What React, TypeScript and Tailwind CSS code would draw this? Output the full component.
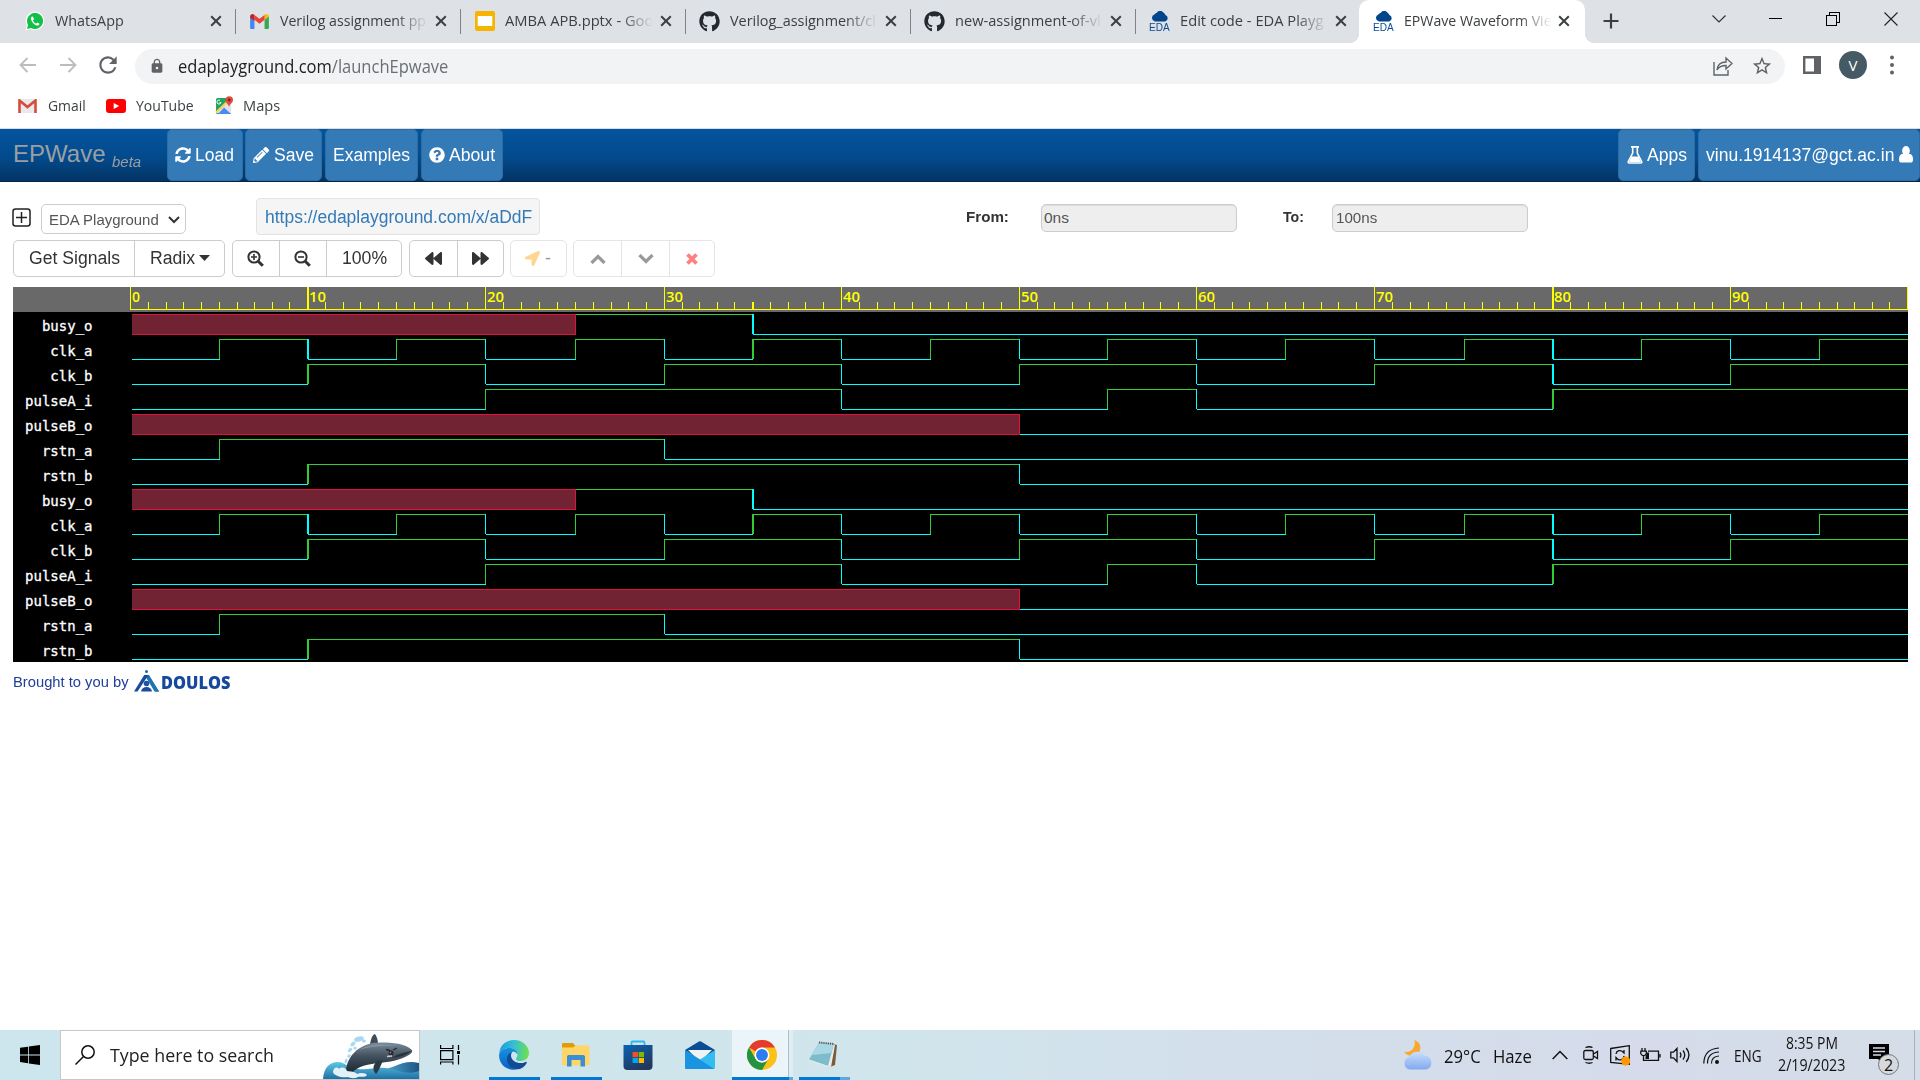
import React, { useLayoutEffect, useRef, useState } from "react";
import {
  FaGithub, FaSyncAlt, FaPencilAlt, FaQuestionCircle,
  FaBackward, FaForward, FaLocationArrow,
} from "react-icons/fa";
import { MdLock, MdRefresh, MdStarBorder } from "react-icons/md";

/* Text squeezed or stretched horizontally to an exact width. */
function Fit({ w, className = "", children }: { w: number; className?: string; children: React.ReactNode }) {
  const ref = useRef<HTMLSpanElement>(null);
  const [s, setS] = useState(1);
  useLayoutEffect(() => {
    if (ref.current) setS(w / ref.current.offsetWidth);
  }, [w]);
  return (
    <span className={"block shrink-0 whitespace-nowrap leading-none " + className} style={{ width: w }}>
      <span ref={ref} className="inline-block origin-left whitespace-pre" style={{ transform: `scaleX(${s})` }}>
        {children}
      </span>
    </span>
  );
}

/* ---------- favicons ---------- */
const WhatsAppIcon = () => (
  <svg viewBox="0 0 20 20" className="size-5">
    <path d="M0.500 19.500l1.400-5A9.300 9.300 0 1 1 5.600 18z" fill="#fff" />
    <path d="M2 18l1.100-4A8 8 0 1 1 6 16.900z" fill="#12bf47" />
    <path d="M7 5.600c-.9.4-1.400 1.600-.9 3.100 1 3 3.300 5 5.600 5.700 1.500.4 2.700-.3 2.800-1.700l-2-1.200-1.200 1.100C9.800 12 8.600 10.800 8 9.400l1-1.200-1-2.500z" fill="#fff" />
  </svg>
);
const GmailIcon = () => (
  <svg viewBox="0 0 20 16" className="h-[15px] w-[19px]">
    <path d="M0 2.500V15a1 1 0 0 0 1 1h3.600V6z" fill="#4285f4" />
    <path d="M20 2.500V15a1 1 0 0 1-1 1h-3.600V6z" fill="#34a853" />
    <path d="M15.400 6l4.600-3.300C20 .3 17.500-.6 15.800.7L15.400 1z" fill="#fbbc04" />
    <path d="M4.600 6.200V1L10 5l5.400-4v5.200L10 10.300z" fill="#ea4335" />
    <path d="M0 2.700v1.200l4.600 3.300V1l-.4-.3C2.500-.6 0 .3 0 2.700z" fill="#c5221f" />
  </svg>
);
const SlidesIcon = () => (
  <svg viewBox="0 0 20 20" className="size-5">
    <rect width="20" height="20" rx="2" fill="#f4b400" />
    <rect x="2.700" y="5" width="14.600" height="10" fill="#fff" />
  </svg>
);
const EdaIcon = () => (
  <span className="flex h-5 w-[21px] flex-col items-center">
    <svg viewBox="0 0 18 11" className="h-[11px] w-[18px] shrink-0">
      <path d="M4 10.500a3.700 3.700 0 0 1-.6-7.100A3 3 0 0 1 5.600 2a4 4 0 0 1 7-.2 3.700 3.700 0 0 1 1.800 2.200 3.400 3.400 0 0 1-.2 6.500z" fill="#01458b" />
    </svg>
    <Fit w={21} className="font-['Liberation_Sans'] text-[11px] text-[#0c4d92]">EDA</Fit>
  </span>
);

const tabs = [
  { icon: <WhatsAppIcon />, title: "WhatsApp", w: 69, fade: false },
  { icon: <GmailIcon />, title: "Verilog assignment pp", w: 146, fade: true },
  { icon: <SlidesIcon />, title: "AMBA APB.pptx - Goo", w: 148, fade: true },
  { icon: <FaGithub size={21} color="#24292f" />, title: "Verilog_assignment/cl", w: 146, fade: true },
  { icon: <FaGithub size={21} color="#24292f" />, title: "new-assignment-of-vl", w: 146, fade: true },
  { icon: <EdaIcon />, title: "Edit code - EDA Playg", w: 143, fade: true },
  { icon: <EdaIcon />, title: "EPWave Waveform Vie", w: 148, fade: true },
];

const CloseX = () => (
  <svg viewBox="0 0 12 12" className="size-3"><path d="M1.200 1.200l9.600 9.600M10.800 1.200L1.200 10.800" stroke="#3c4043" strokeWidth="2" /></svg>
);

function TabStrip() {
  return (
    <div className="flex h-[43px] bg-[#dee1e6]">
      <div className="flex pl-[11px]">
        {tabs.map((t, i) => {
          const active = i === tabs.length - 1;
          return (
            <div key={i} className={"relative flex h-[43px] items-center " + (active ? "w-[226px] rounded-t-[10px] bg-white pl-[14px]" : i === 5 ? "w-[223px] pl-[13px]" : "w-[225px] pl-[13px]")}>
              {active && (
                <>
                  <span className="absolute bottom-0 -left-[10px] size-[10px] bg-[radial-gradient(circle_at_0_0,#dee1e6_10px,#fff_10.500px)]" />
                  <span className="absolute bottom-0 -right-[10px] size-[10px] bg-[radial-gradient(circle_at_100%_0,#dee1e6_10px,#fff_10.500px)]" />
                </>
              )}
              <span className="-mt-px flex w-[21px] justify-center">{t.icon}</span>
              <span className={"-mt-[2px] ml-[10px] w-[147px] overflow-hidden py-1 text-[15px] text-[#3c4043] " + (t.fade ? "[mask-image:linear-gradient(to_right,#000_115px,transparent_148px)]" : "")}>
                <Fit w={t.w}>{t.title}</Fit>
              </span>
              <span className={"-mt-px flex " + (active ? "ml-[7px]" : "ml-[8px]")}><CloseX /></span>
              {i < 5 && <span className="ml-auto h-[25px] w-px bg-[#808387]" />}
            </div>
          );
        })}
      </div>
      <svg viewBox="0 0 16 16" className="mt-[13px] ml-[18px] size-4"><path d="M8 0.500v15M0.500 8h15" stroke="#3c4043" strokeWidth="2.200" /></svg>
      <div className="ml-auto flex pt-3 pr-[22px]">
        <svg viewBox="0 0 14 14" className="mr-[43px] size-[14px]"><path d="M.5 3.500L7 10l6.500-6.500" fill="none" stroke="#333" strokeWidth="1.200" /></svg>
        <svg viewBox="0 0 14 14" className="mr-[43px] size-[14px]" shapeRendering="crispEdges"><path d="M0 6.500h13" stroke="#000" /></svg>
        <svg viewBox="0 0 14 14" className="mr-[44px] size-[14px]" shapeRendering="crispEdges"><path d="M.5 3.500h10v10h-10zM3 3V.5h10.500v10H11" fill="none" stroke="#000" /></svg>
        <svg viewBox="0 0 14 14" className="size-[14px]"><path d="M.5.5l13 13M13.500.5l-13 13" stroke="#222" strokeWidth="1.100" /></svg>
      </div>
    </div>
  );
}

function Toolbar() {
  return (
    <div className="flex h-[45px] items-center pt-[1px]">
      <svg viewBox="0 0 18 16" className="-mt-[2px] ml-[19px] h-4 w-[18px]"><path d="M17 8H1.500M8.500 1L1.500 8l7 7" fill="none" stroke="#babcbe" strokeWidth="1.800" /></svg>
      <svg viewBox="0 0 18 16" className="-mt-[2px] ml-[22px] h-4 w-[18px]"><path d="M1 8h15.500M9.500 1l7 7-7 7" fill="none" stroke="#babcbe" strokeWidth="1.800" /></svg>
      <MdRefresh size={26} color="#5f6368" className="-mt-[2px] ml-[18px]" />
      <div className="ml-[14px] flex h-[35px] w-[1650px] items-center rounded-full bg-[#f1f3f4]">
        <MdLock size={16} color="#5f6368" className="ml-[14px]" />
        <Fit w={270} className="mt-px ml-[13px] text-[17.500px] text-[#202124]">edaplayground.com<span className="text-[#6b6f74]">/launchEpwave</span></Fit>
        <svg viewBox="0 0 20 20" className="ml-auto size-5"><path d="M1 6v13h14v-5M4 14c.5-5 3.500-8 9-8V2l6 5.500-6 5.500V9.500c-4 0-7 1-9 4.500z" fill="none" stroke="#5f6368" strokeWidth="1.400" /></svg>
        <MdStarBorder size={22} color="#5f6368" className="mr-[12px] ml-[18px]" />
      </div>
      <svg viewBox="0 0 18 18" className="-mt-[2px] ml-[18px] size-[18px]"><path d="M1.200 1.200h15.600v15.600H1.200z" fill="none" stroke="#5f6368" strokeWidth="2.400" /><path d="M11 1h6v16h-6z" fill="#5f6368" /></svg>
      <span className="-mt-[2px] ml-[18px] flex size-7 items-center justify-center rounded-full bg-[#455a64] text-[15px] text-white">V</span>
      <svg viewBox="0 0 4 20" className="-mt-[2px] ml-[23px] h-5 w-1" fill="#5f6368"><circle cx="2" cy="2.500" r="2" /><circle cx="2" cy="10" r="2" /><circle cx="2" cy="17.500" r="2" /></svg>
    </div>
  );
}

function Bookmarks() {
  return (
    <div className="flex h-[41px] items-center border-b border-[#dcdcdc] pb-[5px] text-[15px] text-[#3c4043]">
      <svg viewBox="0 0 19 14" className="ml-[18px] h-[14px] w-[19px]"><path d="M1 0h17v14H1z" fill="#eaeaea" /><path d="M1.500 14V1.500l8 6.500 8-6.500V14" fill="none" stroke="#d54b3d" strokeWidth="2.600" /></svg>
      <Fit w={38} className="ml-[11px]">Gmail</Fit>
      <svg viewBox="0 0 20 14" className="ml-[20px] h-[14px] w-5"><rect width="20" height="14" rx="3" fill="#f00" /><path d="M7.700 4v6l5.500-3z" fill="#fff" /></svg>
      <Fit w={58} className="ml-[10px]">YouTube</Fit>
      <svg viewBox="0 0 19 18" className="-mt-px ml-[21px] h-[18px] w-[19px]">
        <rect x="1" y="2" width="15" height="16" rx="1.500" fill="#1fa463" />
        <path d="M1 17L13 5l3 3v9z" fill="#dfe3e6" /><path d="M3 18l6-6.500 7 6.500z" fill="#4a89f3" /><path d="M1 16.500L13 5" stroke="#fdd04b" strokeWidth="2" />
        <path d="M4.900 4.300a2 2 0 1 0 1 2.200H4.500" stroke="#fff" fill="none" />
        <path d="M14 11c-.5-3-3.500-4-3.500-7a3.700 3.700 0 0 1 7.500 0c0 3-3.500 4-4 7z" fill="#de4d40" /><circle cx="14.200" cy="4" r="1.400" fill="#7d231b" />
      </svg>
      <Fit w={37} className="ml-[9px]">Maps</Fit>
    </div>
  );
}

const navBtn = "flex h-[52px] items-center rounded-[5px] border border-[#2e6da4] bg-[#337ab7] text-white";

function NavBar() {
  return (
    <div className="flex h-[53px] border-b border-[#03254c] bg-[linear-gradient(#03549f,#034a8c_55%,#033463)] font-['Liberation_Sans'] text-[18px]">
      <div className="flex h-[50px] w-[153px] items-center pl-[13px] text-[#9a9fa3]">
        <Fit w={92} className="text-[24px]">EPWave</Fit>
        <Fit w={29} className="mt-[15px] ml-[7px] text-[15.500px] italic">beta</Fit>
      </div>
      <div className={navBtn + " ml-[14px] w-[76px]"}><FaSyncAlt size={16} className="ml-[7px]" /><Fit w={39} className="ml-[4px]">Load</Fit></div>
      <div className={navBtn + " ml-[2px] w-[77px]"}><FaPencilAlt size={16} className="ml-[7px]" /><Fit w={40} className="ml-[5px]">Save</Fit></div>
      <div className={navBtn + " ml-[3px] w-[93px]"}><Fit w={77} className="ml-[7px]">Examples</Fit></div>
      <div className={navBtn + " ml-[3px] w-[82px]"}><FaQuestionCircle size={16} className="ml-[7px]" /><Fit w={46} className="ml-[4px]">About</Fit></div>
      <div className={navBtn + " ml-auto w-[77px]"}>
        <svg viewBox="0 0 16 18" className="-mt-px ml-[8px] h-[18px] w-4"><path d="M4 .9h8M5.700 1v6L1.300 15.500q-.5 1.500 1 1.500h11.400q1.500 0 1-1.500L10.300 7V1" fill="none" stroke="#fff" strokeWidth="1.600" /><path d="M4.500 10.500h7L14 16H2z" fill="#fff" /></svg>
        <Fit w={40} className="ml-[4px]">Apps</Fit>
      </div>
      <div className={navBtn + " ml-[3px] w-[222px]"}>
        <Fit w={188} className="ml-[7px]">vinu.1914137@gct.ac.in</Fit>
        <svg viewBox="0 0 14 17" className="-mt-px ml-[5px] h-[17px] w-[14px]" fill="#fff"><ellipse cx="7" cy="4.800" rx="3.900" ry="4.800" /><path d="M2.500 8C.5 9 0 11 0 13.500 0 16 1 16.500 2.500 16.500h9c1.500 0 2.500-.5 2.500-3C14 11 13.500 9 11.500 8z" /></svg>
      </div>
    </div>
  );
}

const grp = "flex h-[37px] rounded-[5px] border border-[#ccc] [&>*]:flex [&>*]:items-center [&>*+*]:border-l [&>*+*]:border-[#ccc]";

const Magnifier = ({ plus }: { plus: boolean }) => (
  <svg viewBox="0 0 17 17" className="size-[17px]" fill="none" stroke="#333">
    <circle cx="7" cy="7" r="5.600" strokeWidth="2" /><path d="M11.200 11.200l4.600 4.600" strokeWidth="3" /><path d={plus ? "M4 7h6M7 4v6" : "M4 7h6"} strokeWidth="1.600" />
  </svg>
);

function Controls() {
  return (
    <div className="font-['Liberation_Sans'] text-[#333]">
      <div className="flex h-[58px] pt-[16px] pl-[12px]">
        <svg viewBox="0 0 19 19" className="mt-[10px] size-[19px]"><rect x="1" y="1" width="17" height="17" rx="2.500" fill="none" stroke="#222" strokeWidth="1.500" /><path d="M9.500 4v11M4 9.500h11" stroke="#222" strokeWidth="1.500" /></svg>
        <div className="mt-[6px] ml-[10px] flex h-[30px] w-[145px] items-center rounded-[5px] border border-[#ccc] pt-[2px] pl-[7px] text-[15.500px] text-[#555]">
          <Fit w={110}>EDA Playground</Fit>
          <svg viewBox="0 0 12 8" className="ml-[9px] h-2 w-3"><path d="M1 1l5 5 5-5" fill="none" stroke="#333" strokeWidth="2" /></svg>
        </div>
        <div className="ml-[70px] flex h-[37px] w-[284px] items-center rounded-[4px] border border-[#e3e3e3] bg-[#f5f5f5] pl-[8px] text-[18px] text-[#337ab7]">
          <Fit w={267}>https://edaplayground.com/x/aDdF</Fit>
        </div>
        <Fit w={43} className="mt-[11px] ml-[426px] text-[15.500px] font-bold">From:</Fit>
        <div className="mt-[6px] ml-[32px] flex h-[28px] w-[196px] items-center rounded-[5px] border border-[#ccc] bg-[#eee] pl-[2px] shadow-[inset_0_1px_1px_rgba(0,0,0,0.08)]">
          <Fit w={25} className="text-[15.500px] text-[#555]">0ns</Fit>
        </div>
        <Fit w={21} className="mt-[11px] ml-[46px] text-[15.500px] font-bold">To:</Fit>
        <div className="mt-[6px] ml-[28px] flex h-[28px] w-[196px] items-center rounded-[5px] border border-[#ccc] bg-[#eee] pl-[3px] shadow-[inset_0_1px_1px_rgba(0,0,0,0.08)]">
          <Fit w={41} className="text-[15.500px] text-[#555]">100ns</Fit>
        </div>
      </div>
      <div className="flex h-[47px] pl-[13px] text-[18px]">
        <div className={grp + " w-[212px]"}>
          <div className="w-[120px] pb-[2px] pl-[15px]"><Fit w={91}>Get Signals</Fit></div>
          <div className="pb-[2px] pl-[15px]"><Fit w={45}>Radix</Fit><svg viewBox="0 0 11 6" className="ml-[4px] h-[6px] w-[11px]"><path d="M0 0h11L5.500 6z" fill="#333" /></svg></div>
        </div>
        <div className={grp + " ml-[7px] w-[170px]"}>
          <div className="w-[46px] pl-[14px]"><Magnifier plus /></div>
          <div className="w-[47px] pl-[14px]"><Magnifier plus={false} /></div>
          <div className="pb-[2px] pl-[15px]"><Fit w={45}>100%</Fit></div>
        </div>
        <div className={grp + " ml-[7px] w-[95px]"}>
          <div className="w-[47px] justify-center"><FaBackward size={17} /></div>
          <div className="w-[45px] justify-center"><FaForward size={17} /></div>
        </div>
        <div className={grp + " ml-[6px] w-[57px] !border-[#e5e5e5]"}>
          <div className="pl-[14px] text-[#999]"><FaLocationArrow size={15} color="#ffd591" /><span className="ml-[5px]">-</span></div>
        </div>
        <div className={grp + " ml-[6px] w-[142px] !border-[#e5e5e5] [&>*+*]:!border-[#e5e5e5]"}>
          <div className="w-[47px] justify-center"><svg viewBox="0 0 16 10" className="h-[10px] w-4"><path d="M1.500 9L8 2.500 14.500 9" fill="none" stroke="#999" strokeWidth="3.200" /></svg></div>
          <div className="w-[48px] justify-center"><svg viewBox="0 0 16 10" className="h-[10px] w-4"><path d="M1.500 1L8 7.500 14.500 1" fill="none" stroke="#999" strokeWidth="3.200" /></svg></div>
          <div className="w-[45px] justify-center"><svg viewBox="0 0 12 12" className="size-3"><path d="M1.500 1.500l9 9M10.500 1.500l-9 9" stroke="#ff8080" strokeWidth="3.800" /></svg></div>
        </div>
      </div>
    </div>
  );
}

/* ---------- waveform ---------- */
type Seg = [number, "0" | "1" | "x"];
const clock = (half: number): Seg[] =>
  Array.from({ length: 100 / half }, (_, i): Seg => [i * half, i % 2 ? "1" : "0"]);
const signals: [string, Seg[]][] = [
  ["busy_o", [[0, "x"], [25, "1"], [35, "0"]]],
  ["clk_a", clock(5)],
  ["clk_b", clock(10)],
  ["pulseA_i", [[0, "0"], [20, "1"], [40, "0"], [55, "1"], [60, "0"], [80, "1"]]],
  ["pulseB_o", [[0, "x"], [50, "0"]]],
  ["rstn_a", [[0, "0"], [5, "1"], [30, "0"]]],
  ["rstn_b", [[0, "0"], [10, "1"], [50, "0"]]],
];
const GREEN = "#32cd32";
const AQUA = "#00ffff";
/* Snapped x of every fifth time unit, and the units whose line is two pixels wide. */
const grid = [0, 89, 177, 266, 355, 445, 534, 622, 711, 800, 889, 977, 1066, 1155, 1244, 1334, 1422, 1511, 1600, 1689, 1777];
const thick = [10, 35, 80];
const edge = (t: number): [number, number] => {
  const k = Math.floor(t / 5);
  const f = (t % 5) / 5;
  const x = f ? Math.round(grid[k] + (grid[k + 1] - grid[k]) * f) : grid[k];
  return [x, thick.includes(t) ? 2 : 1];
};

function Wave({ segs }: { segs: Seg[] }) {
  return (
    <svg viewBox="0 0 1778 25" className="block h-[25px] w-[1778px]" shapeRendering="crispEdges">
      {segs.map(([t, v], i) => {
        const end = i + 1 < segs.length ? segs[i + 1][0] : 100;
        const x0 = t === 0 ? 2 : edge(t)[0];
        const x1 = end === 100 ? 1778 : edge(end)[0] + 1;
        const c = v === "1" ? GREEN : AQUA;
        if (v === "x")
          return (
            <g key={i}>
              <rect x={x0} y="2" width={x1 - x0} height="21" fill="#dc143c" />
              <rect x={x0} y="3" width={x1 - x0 - 1} height="19" fill="#722333" />
            </g>
          );
        const fromX = t > 0 && segs[i - 1][1] === "x";
        return (
          <g key={i} fill={c}>
            {t > 0 && !fromX && <rect x={edge(t)[0]} y="2" width={edge(t)[1]} height="20" />}
            <rect x={x0 + (t > 0 ? 1 : 0)} y={v === "1" ? 2 : 22} width={x1 - x0 - (t > 0 ? 1 : 0)} height="1" />
          </g>
        );
      })}
    </svg>
  );
}

function Viewer() {
  return (
    <div className="ml-[13px] w-[1895px]">
      <div className="flex h-[25px] bg-[#696969] pl-[117px]">
        <svg viewBox="0 0 1778 25" className="block h-[25px] w-[1778px]" fill="#ffff00">
          <g shapeRendering="crispEdges">
            <rect x="0" y="22" width="1778" height="1" />
            {Array.from({ length: 101 }, (_, t) => (
              <rect key={t} x={edge(t)[0]} y={t % 10 ? 15 : 0} width={edge(t)[1]} height={t % 10 ? 7 : 22} />
            ))}
          </g>
          {Array.from({ length: 10 }, (_, i) => (
            <text key={i} x={edge(i * 10)[0] + 2} y="15" fontSize="14.500" fontWeight="600" fontFamily="Open Sans" textLength={i ? 17 : 8} lengthAdjust="spacingAndGlyphs">{i * 10}</text>
          ))}
        </svg>
      </div>
      <div className="bg-black">
        {[...signals, ...signals].map(([name, segs], i) => (
          <div key={i} className="flex h-[25px]">
            <span className="w-[80px] pt-[2px] pr-[0.500px] text-right font-['DejaVu_Sans_Mono'] text-[14px] leading-[25px] text-white [-webkit-text-stroke:0.300px_#fff]">{name}</span>
            <span className="ml-[37px]"><Wave segs={segs} /></span>
          </div>
        ))}
      </div>
      <div className="flex h-[40px] items-center font-['Liberation_Sans'] text-[15.500px] text-[#21409a]">
        <Fit w={116}>Brought to you by</Fit>
        <svg viewBox="0 0 25 22" className="mb-[2px] ml-[5px] h-[22px] w-[25px]">
          <circle cx="12.500" cy="1.500" r="1.500" fill="#1c63ad" />
          <path d="M10.200 5h4.600L25 21.500h-3.500L12.500 8 3.500 21.500H0z" fill="#1b4c9c" />
          <path d="M14.800 5L25 21.500h-4.500L12.500 8z" fill="#1f74b8" />
          <circle cx="12.500" cy="13.500" r="2.800" fill="#1c56a3" /><path d="M7 21.500c.5-3 2.500-4.500 5.500-4.500s5 1.500 5.500 4.500z" fill="#1b4c9c" />
        </svg>
        <Fit w={69} className="ml-[2px] font-['Open_Sans'] text-[18px] font-extrabold text-[#16489c]">DOULOS</Fit>
      </div>
    </div>
  );
}

/* ---------- taskbar ---------- */
const Orca = () => (
  <svg viewBox="0 0 96 48" className="h-[48px] w-[96px]">
    <defs>
      <linearGradient id="sea" x1="0" y1="0" x2="0" y2="1"><stop offset="0" stopColor="#5cc9e0" /><stop offset="1" stopColor="#1f6fa6" /></linearGradient>
      <linearGradient id="wv" x1="0" y1="0" x2="1" y2="0"><stop offset="0" stopColor="#4aa3cf" /><stop offset="1" stopColor="#1d5685" /></linearGradient>
      <linearGradient id="body" x1="0" y1="0" x2="0" y2="1"><stop offset="0" stopColor="#7b8c9a" /><stop offset=".45" stopColor="#43525f" /><stop offset="1" stopColor="#1e2a33" /></linearGradient>
    </defs>
    <path d="M62 38c10-1 18-10 34-6v16H62z" fill="url(#wv)" />
    <g fill="#a9d8f4"><ellipse cx="36" cy="8" rx="5" ry="2.500" transform="rotate(-15 36 8)" /><ellipse cx="41" cy="10" rx="2" ry="1.500" /><ellipse cx="30" cy="13" rx="3" ry="1.800" transform="rotate(-40 30 13)" /><ellipse cx="27" cy="19" rx="2.500" ry="1.600" transform="rotate(-40 27 19)" /><circle cx="32" cy="17" r="1.600" /><ellipse cx="26" cy="25" rx="2" ry="1.400" transform="rotate(-50 26 25)" /><ellipse cx="23" cy="30" rx="1.300" ry="2.500" transform="rotate(20 23 30)" /></g>
    <path d="M0 48C1 36 7 31 15 31c7 0 10 6 20 7 12 1 17-2 27-1 12 1 22 8 34 3v8z" fill="url(#sea)" />
    <path d="M47 13c1-5 2-9 5-10 2 3 3 6 3 10z" fill="#3f4c58" />
    <path d="M23 40C24 24 38 11 58 11.500c12 0 24 1 31 7.500 1 2-1 4-5 6-8 4-17 6-28 7-12 1-22 4-26 9z" fill="url(#body)" />
    <path d="M36 19c9-6 24-6 38-4-14-1-27 0-38 4z" fill="#9fb0bd" opacity=".5" />
    <path d="M54 30c-4 4-5 9-1 13 3-3 5-9 7-14z" fill="#2b3944" />
    <path d="M89 20c-6 4-12 6-20 7 6-4 12-6 20-7z" fill="#26323c" />
    <circle cx="68" cy="22" r="2.400" fill="#20262c" /><path d="M64 25.500l5-.5" stroke="#c8cfd6" strokeWidth="1.600" /><path d="M63 18.500l4 1M70 19l4-2" stroke="#1f2930" strokeWidth="1.300" /><circle cx="67.500" cy="21.600" r=".8" fill="#c98d8d" />
    <path d="M10 41c0-4 4-6 6-3 3-3 7-1 8 2 3 1 8 0 10 3 4-2 9-1 10 1-2 3-7 1-9 2-3 2-8 1-10 0-6 1-14-1-15-5z" fill="#e3f0f8" />
  </svg>
);

const EdgeIcon = () => (
  <svg viewBox="0 0 30 30" className="size-[30px]">
    <defs>
      <linearGradient id="eg" x1="0" y1=".3" x2="1" y2=".4"><stop offset="0" stopColor="#1b9de2" /><stop offset=".5" stopColor="#35c1d0" /><stop offset="1" stopColor="#6ee04e" /></linearGradient>
      <linearGradient id="eb" x1="0" y1="0" x2="0" y2="1"><stop offset="0" stopColor="#1691e0" /><stop offset="1" stopColor="#0c5fc4" /></linearGradient>
    </defs>
    <path d="M.3 13C1 5 7.500 0 15 0c9 0 15 6.500 15 13 0 5-4 8-8.500 8-3 0-5-1-4.500-2.500 1-1.500 1.500-2.500 1.500-4 0-3.500-3.500-6.500-8-6.500C6 8 2 10 .3 13z" fill="url(#eg)" />
    <path d="M.2 14C1.500 10 5.500 8 10.500 8c4 0 8 2.500 8 6.500-1-2-3-3-4.500-3-4 1.500-6 6-4 11 1 3.500 4 6.500 8 7C8 31.500-1 24 .2 14z" fill="url(#eb)" />
    <path d="M14 11.500c-6 2-8 8-4 13.500 3 4.500 9 5.500 13 3 2.500-1.500 4.500-4 4.800-5.500 0-.8-.6-1-1.300-.6-2 1-4.500 1.400-6.500 1.100-5-.7-8-4-8-7.500 0-1.700.8-3.300 2-4z" fill="#114a95" />
  </svg>
);
const ExplorerIcon = () => (
  <svg viewBox="0 0 28 24" className="h-6 w-7">
    <path d="M0 1.500C0 .5.500 0 1.500 0H11l2.500 3L12 6H0z" fill="#e09c0b" /><path d="M0 4.500h11l2.500-2H26c1 0 1.500.5 1.500 1.500v17c0 1-.5 1.500-1.500 1.500H1.500C.5 22.500 0 22 0 21z" fill="#ffd567" />
    <path d="M5 23.500V14c0-1.500 1-2 2-2h14c1.500 0 2 1 2 2v9.500h-4.500V17H9.500v6.500z" fill="#3a8fd4" />
  </svg>
);
const StoreIcon = () => (
  <svg viewBox="0 0 30 30" className="size-[30px]">
    <defs><linearGradient id="st" x1="0" y1="0" x2=".5" y2="1"><stop offset="0" stopColor="#0a63b4" /><stop offset="1" stopColor="#22385f" /></linearGradient></defs>
    <path d="M8.500 6V2.500Q8.500 1.500 9.500 1.500h11q1 0 1 1V6" fill="none" stroke="#2cb7ef" strokeWidth="1.800" />
    <path d="M.5 5h29v21a4 4 0 0 1-4 4h-21a4 4 0 0 1-4-4z" fill="url(#st)" />
    <path d="M9.500 12H15v5.200H9.500z" fill="#f25022" /><path d="M15.700 12H21v5.200h-5.300z" fill="#7fba00" /><path d="M9.500 18H15v5H9.500z" fill="#00a4ef" /><path d="M15.700 18H21v5h-5.300z" fill="#ffb900" />
  </svg>
);
const MailIcon = () => (
  <svg viewBox="0 0 30 28" className="h-7 w-[30px]">
    <path d="M0 9L14 .5q1-.7 2 0L30 9v6H0z" fill="#0a4d94" /><path d="M3 9h24L17 19h-4z" fill="#f1f2f4" />
    <path d="M0 9l15 9.500L30 9v17.500q0 1.500-1.500 1.500h-27Q0 28 0 26.500z" fill="#35bdf0" /><path d="M0 9l29 18.700L28 28H1.500Q0 28 0 26.500z" fill="#1a93e0" />
  </svg>
);
const ChromeIcon = () => (
  <svg viewBox="0 0 48 48" className="size-[30px]">
    <circle cx="24" cy="24" r="24" fill="#fbc116" />
    <path d="M3.200 12A24 24 0 0 1 44.800 12H24a12 12 0 0 0-10.400 6z" fill="#e33b2e" />
    <path d="M3.200 12A24 24 0 0 0 24 48l10.400-18A12 12 0 0 1 13.600 30z" fill="#229342" />
    <circle cx="24" cy="24" r="12" fill="#fff" /><circle cx="24" cy="24" r="9.500" fill="#2d7cf0" />
  </svg>
);
const NotepadIcon = () => (
  <svg viewBox="0 0 28 27" className="h-[27px] w-7">
    <path d="M24 3l4 1-2 20-5 2z" fill="#7a5c3a" /><path d="M23 3l3 1-4 22-5-2z" fill="#e9ecee" />
    <path d="M10 1.500L25 3l-6 22L0 18.500z" fill="#7fbccb" /><path d="M10 1.500L25 3l-3 9L3 14z" fill="#a9d8e2" /><path d="M0 18.500l19 6.500v1.500L.5 20z" fill="#dfe9ec" />
    <path d="M10 1.500L25 3" stroke="#555" strokeWidth="2" strokeDasharray="1.200 1" />
  </svg>
);

const slot = "flex h-[50px] flex-col items-center justify-end";
const PinnedApp = ({ children, ml, bar = true }: { children: React.ReactNode; ml: string; bar?: boolean }) => (
  <div className={slot + " w-[51px] " + ml}>
    <span className="flex flex-1 items-center justify-center pt-[3px] pr-px">{children}</span>
    <span className={"h-[3px] w-full " + (bar ? "bg-[#0078d7]" : "")} />
  </div>
);

function Taskbar() {
  return (
    <div className="flex h-[50px] bg-[linear-gradient(to_right,#cde5ed,#d0e5ec_45%,#d3dfeb_65%,#d5dbea_85%,#d4dde8)] text-[#111]">
      <svg viewBox="0 0 20 20" className="mt-[15px] ml-5 size-5"><path d="M0 2.800L8 1.700v7.800H0zM8.800 1.600L20 0v9.500H8.800zM0 10.400h8v7.800l-8-1.100zM8.800 10.400H20V20L8.800 18.400z" fill="#000" /></svg>
      <div className="ml-5 flex h-[50px] w-[360px] items-center border border-[#c6c8ca] bg-white">
        <svg viewBox="0 0 20 20" className="ml-[14px] size-5" fill="none" stroke="#111" strokeWidth="1.500"><circle cx="13" cy="7" r="6.200" /><path d="M8.500 11.500L.5 19.500" /></svg>
        <Fit w={164} className="ml-[15px] text-[19px] text-[#222]">Type here to search</Fit>
        <span className="ml-auto"><Orca /></span>
      </div>
      <svg viewBox="0 0 20 20" className="mt-[15px] ml-[20px] size-5" fill="none" stroke="#000" strokeWidth="1.200"><path d="M.6 0v3.500h12.300V0M.6 5.600h12.300v9H.6zM.6 19.500V17h12.300v2.500M18.500 0v5M18.500 10v9.500" /><path d="M17 6h3v3h-3z" fill="#000" stroke="none" /></svg>
      <PinnedApp ml="ml-[29px]"><EdgeIcon /></PinnedApp>
      <PinnedApp ml="ml-[11px]"><ExplorerIcon /></PinnedApp>
      <PinnedApp ml="ml-[11px]" bar={false}><StoreIcon /></PinnedApp>
      <PinnedApp ml="ml-[11px]" bar={false}><MailIcon /></PinnedApp>
      <div className="ml-[6px] flex">
        <div className={slot + " w-[57px] border-r border-[#a9c2cc] bg-[#ebf4f8]"}>
          <span className="flex flex-1 items-center pt-[3px] pl-[3px]"><ChromeIcon /></span>
          <span className="h-[3px] w-[57px] bg-[#0078d7]" />
        </div>
        <div className={slot + " w-[4px] bg-[#dfecf2]"}><span className="h-[3px] w-full bg-[#5fa9e3]" /></div>
      </div>
      <div className={slot + " ml-[6px] w-[51px]"}>
        <span className="flex flex-1 items-center pt-[2px] pr-[3px]"><NotepadIcon /></span>
        <span className="flex h-[3px] w-full"><span className="w-[41px] bg-[#0078d7]" /><span className="flex-1 bg-[#5fa9e3]" /></span>
      </div>

      <div className="ml-auto flex items-center">
        <svg viewBox="0 0 30 30" className="size-[30px]">
          <defs><linearGradient id="cl" x1="0" y1="0" x2="0" y2="1"><stop offset="0" stopColor="#c9defa" /><stop offset="1" stopColor="#82aaf0" /></linearGradient></defs>
          <path d="M11.500 0c8 3 8 13-1 15.500-4 .8-7-.5-9.500-3.500 8 1 12-5 10.500-12z" fill="#fba62c" />
          <path d="M6.500 29.500a6.500 6.500 0 0 1-.5-12.500A9 9 0 0 1 21.500 15.500a7.200 7.200 0 0 1 2 14z" fill="url(#cl)" />
        </svg>
        <Fit w={37} className="mt-[2px] ml-[11px] text-[18px]">29°C</Fit>
        <Fit w={39} className="mt-[2px] ml-[12px] text-[18px]">Haze</Fit>
        <svg viewBox="0 0 16 10" className="ml-[20px] h-[10px] w-4"><path d="M.7 9L8 1.500 15.300 9" fill="none" stroke="#111" strokeWidth="1.500" /></svg>
        <svg viewBox="0 0 16 18" className="ml-[15px] h-[18px] w-4" fill="none" stroke="#111" strokeWidth="1.300"><rect x=".8" y="4.500" width="9.500" height="9" rx="1.500" /><path d="M10.500 8l4-2.500v7l-4-2.500M2.500 1.500q4-1.500 7 0M2.500 16.500q4 1.500 7 0" /></svg>
        <svg viewBox="0 0 21 21" className="ml-[11px] size-[21px]" fill="none" stroke="#111" strokeWidth="1.300"><path d="M.7 3.500L19.300.7v18.600L.7 17.500z" /><path d="M6 9a4 4 0 0 1 7-2l1 1V5M14 11a4 4 0 0 1-7 2.500l-1-1v3" /><circle cx="15.700" cy="16" r="4.500" fill="#ff9800" stroke="none" /></svg>
        <svg viewBox="0 0 21 14" className="ml-[9px] h-[14px] w-[21px]" fill="none" stroke="#111" strokeWidth="1.300"><path d="M5.500 12.300H18.500V3.200H8M20 6v3.500M2 0v3M5 0v3M.8 3.200h5.500v2.500q-1 2-2.700 2T.8 5.700zM3.500 7.500v4.800H6" /><path d="M7 4.500h2v6.500H5.500V9z" fill="#111" stroke="none" /></svg>
        <svg viewBox="0 0 21 18" className="ml-[9px] h-[18px] w-[21px]" fill="none" stroke="#111" strokeWidth="1.300"><path d="M.8 6.200h2.700L7 2.500v13l-3.500-3.700H.8zM10 6.500q1.800 2.500 0 5M13 4.500q3.500 4.500 0 9M16.200 2q5.500 7 0 14" /></svg>
        <svg viewBox="0 0 17 17" className="ml-[12px] size-[17px]" fill="none" stroke="#111" strokeWidth="1.200"><path d="M.8 16.500Q1 2 16 1M4.500 16.500Q4.500 5.500 16 5M8.500 16.500Q8.500 9.500 16 9" /><circle cx="14" cy="15" r="2" fill="#111" stroke="none" /></svg>
        <Fit w={28} className="mt-px ml-[14px] text-[16px]">ENG</Fit>
        <div className="ml-[16px] flex w-[67px] flex-col items-center gap-[7px] pb-px text-[15.500px]">
          <Fit w={52}>8:35 PM</Fit>
          <Fit w={67}>2/19/2023</Fit>
        </div>
        <div className="relative mt-[9px] ml-[24px] h-[31px] w-[31px]">
          <svg viewBox="0 0 20 20" className="size-5"><path d="M0 0h20v15h-6v5l-5-5H0z" fill="#000" /><path d="M4 4h12M4 7.500h12M4 11h8" stroke="#d5dbea" strokeWidth="1.300" /></svg>
          <span className="absolute right-px bottom-0 flex size-[21px] items-center justify-center rounded-full border border-[#777] bg-[#d6d8dc] text-[16px] leading-none font-medium">2</span>
        </div>
        <span className="ml-[14px] h-[50px] w-px bg-[#a9b3bf]" />
        <span className="w-[5px]" />
      </div>
    </div>
  );
}

export default function App() {
  return (
    <div className="flex h-[1080px] w-[1920px] flex-col overflow-hidden bg-white font-['Open_Sans','Noto_Sans',sans-serif]">
      <TabStrip />
      <Toolbar />
      <Bookmarks />
      <NavBar />
      <Controls />
      <Viewer />
      <div className="flex-1" />
      <Taskbar />
    </div>
  );
}
